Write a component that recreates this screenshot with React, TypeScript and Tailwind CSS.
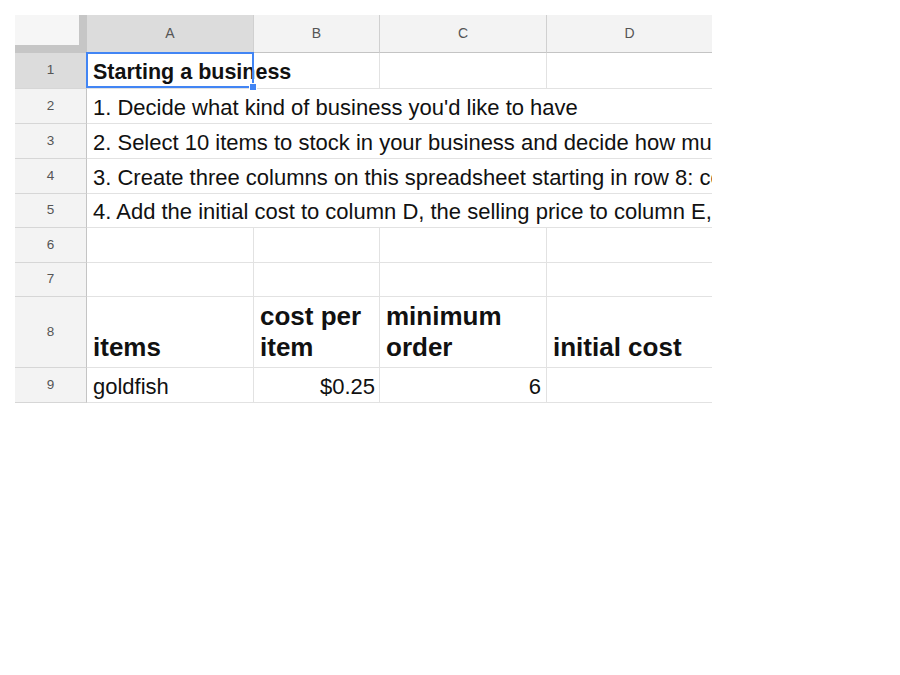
import React from 'react'

// column widths: row header, A, B, C, D (D is clipped by the viewport)
const rowHead = 'w-[72px] shrink-0 flex items-center justify-center text-[13.5px] text-[#555] border-r border-b border-r-[#c4c4c4] border-b-[#d6d6d6]'
const cellBase = 'shrink-0 border-r border-b border-[#e2e2e2] flex items-end px-[6px] pb-[3px] leading-[25px] text-[#111] whitespace-nowrap'
const cell = `${cellBase} text-[22px]`

const notes = [
  "1. Decide what kind of business you'd like to have",
  '2. Select 10 items to stock in your business and decide how much of each item you will need',
  '3. Create three columns on this spreadsheet starting in row 8: cost per item, minimum order, and initial cost',
  '4. Add the initial cost to column D, the selling price to column E, and the profit to column F',
]

function ColHead({ label, width, active }: { label: string; width: string; active?: boolean }) {
  return (
    <div
      className={`${width} shrink-0 h-full flex items-center justify-center text-[14px] text-[#555] border-r border-b border-r-[#d0d0d0] border-b-[#c4c4c4] ${
        active ? 'bg-[#dcdcdc]' : 'bg-[#f3f3f3]'
      }`}
    >
      {label}
    </div>
  )
}

export default function App() {
  return (
    <div className="min-h-screen bg-white p-[15px] font-['Liberation_Sans',Arial,sans-serif]">
      <div className="w-[697px] overflow-hidden">
        {/* Column headers */}
        <div className="flex h-[38px]">
          <div className="w-[72px] shrink-0 h-full bg-[#f6f6f6] border-r-[8px] border-b-[8px] border-[#c6c6c6]" />
          <ColHead label="A" width="w-[167px]" active />
          <ColHead label="B" width="w-[126px]" />
          <ColHead label="C" width="w-[167px]" />
          <div className="w-[165px] shrink-0 h-full flex items-center justify-center text-[14px] text-[#555] bg-[#f3f3f3] border-b border-b-[#c4c4c4]">
            D
          </div>
        </div>

        {/* Row 1 – title, cell A1 selected */}
        <div className="flex h-[36px]">
          <div className={`${rowHead} bg-[#dcdcdc]`}>1</div>
          <div className={`${cellBase} w-[293px] relative font-bold text-[21.5px]`}>
            <span>Starting a business</span>
            <div className="absolute -top-px -left-px w-[168px] h-[36px] border-2 border-[#4285f4]">
              <div className="absolute -right-[5px] -bottom-[5px] w-[8px] h-[8px] bg-[#4285f4] border border-white" />
            </div>
          </div>
          <div className={`${cell} w-[167px]`} />
          <div className={`${cell} w-[165px] border-r-0`} />
        </div>

        {/* Rows 2–5 – instructions overflowing across columns */}
        {notes.map((text, i) => (
          <div key={i} className={`flex ${i === 3 ? 'h-[34px]' : 'h-[35px]'}`}>
            <div className={`${rowHead} bg-[#f3f3f3]`}>{i + 2}</div>
            <div className={`${cell} w-[625px] border-r-0 overflow-hidden`}>{text}</div>
          </div>
        ))}

        {/* Rows 6–7 – empty */}
        {[6, 7].map(n => (
          <div key={n} className={`flex ${n === 6 ? 'h-[35px]' : 'h-[34px]'}`}>
            <div className={`${rowHead} bg-[#f3f3f3]`}>{n}</div>
            <div className={`${cell} w-[167px]`} />
            <div className={`${cell} w-[126px]`} />
            <div className={`${cell} w-[167px]`} />
            <div className={`${cell} w-[165px] border-r-0`} />
          </div>
        ))}

        {/* Row 8 – table headings */}
        <div className="flex h-[71px]">
          <div className={`${rowHead} bg-[#f3f3f3]`}>8</div>
          {[
            ['items', 'w-[167px]'],
            ['cost per item', 'w-[126px]'],
            ['minimum order', 'w-[167px]'],
            ['initial cost', 'w-[165px] border-r-0'],
          ].map(([label, w]) => (
            <div
              key={label}
              className={`${w} shrink-0 border-r border-b border-[#e2e2e2] flex items-end px-[6px] pb-[4px] text-[26px] leading-[31px] font-bold text-[#111] whitespace-normal`}
            >
              <span className="block w-full">{label}</span>
            </div>
          ))}
        </div>

        {/* Row 9 – first item */}
        <div className="flex h-[35px]">
          <div className={`${rowHead} bg-[#f3f3f3]`}>9</div>
          <div className={`${cell} w-[167px]`}>goldfish</div>
          <div className={`${cell} w-[126px] justify-end pr-[4px]`}>$0.25</div>
          <div className={`${cell} w-[167px] justify-end pr-[5px]`}>6</div>
          <div className={`${cell} w-[165px] border-r-0`} />
        </div>
      </div>
    </div>
  )
}
